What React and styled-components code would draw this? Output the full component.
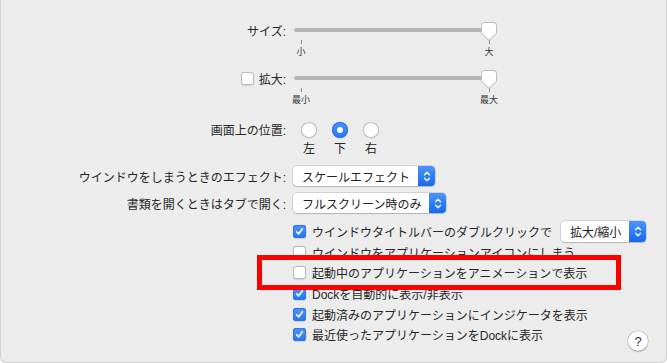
import React from "react";
import styled, { createGlobalStyle, css } from "styled-components";

const GlobalStyle = createGlobalStyle`
  html, body {
    margin: 0;
    padding: 0;
    background: #ffffff;
  }
  body {
    font-family: "Liberation Sans", "Noto Sans CJK JP", sans-serif;
    -webkit-font-smoothing: antialiased;
  }
`;

const Window = styled.div`
  position: relative;
  box-sizing: border-box;
  width: 667px;
  height: 363px;
  padding-top: 20px;
  background: #ececec;
  border: 1px solid #d3d3d3;
  border-top: none;
  border-radius: 0 0 6px 6px;
  color: #262626;
  font-size: 12px;
  overflow: hidden;
`;

const Field = styled.div`
  display: grid;
  grid-template-columns: 285px auto;
  column-gap: 7px;
  align-items: start;
  margin-top: ${p => p.$mt || 0}px;
`;

const Label = styled.div`
  height: ${p => p.$h || 20}px;
  display: flex;
  align-items: center;
  justify-content: flex-end;
  gap: 5px;
  white-space: nowrap;
`;

const SliderBox = styled.div`
  width: 204px;
  display: flex;
  flex-direction: column;
`;

const TrackRow = styled.div`
  height: 20px;
  display: flex;
  align-items: center;
`;

const Track = styled.div`
  flex: 1;
  height: 4px;
  margin-left: 1px;
  border-radius: 2px;
  background: #b5b5b5;
`;

const ThumbSvg = styled.svg`
  flex: none;
  margin-top: 2px;
  margin-left: -1px;
  filter: drop-shadow(0 0.5px 0.5px rgba(0, 0, 0, 0.18));
`;

const Ticks = styled.div`
  height: 20px;
  display: flex;
  justify-content: space-between;
`;

const Tick = styled.div`
  width: 16px;
  display: flex;
  flex-direction: column;
  align-items: center;
  font-size: 9px;
  line-height: 12px;
  white-space: nowrap;
  color: #333;

  &::before {
    content: "";
    width: 1px;
    height: 4px;
    margin-bottom: 2px;
    background: #8c8c8c;
  }
`;

const boxBase = css`
  box-sizing: border-box;
  flex: none;
  background: #fff;
  box-shadow: inset 0 0 0 1px #b9b9b9, 0 0.5px 1px rgba(0, 0, 0, 0.12);
`;

const blueBox = css`
  background: linear-gradient(#4b95fa, #2674f3);
  box-shadow: inset 0 0 0 1px #2b73e6, 0 0.5px 1px rgba(0, 0, 0, 0.12);
`;

const Checkbox = styled.span`
  ${boxBase}
  width: 13px;
  height: 13px;
  border-radius: 3px;
  display: flex;
  align-items: center;
  justify-content: center;
  ${p => p.$checked && blueBox}
`;

const RadioGroup = styled.div`
  display: flex;
  gap: 15px;
  margin-left: 8px;
`;

const RadioItem = styled.div`
  width: 16px;
  display: flex;
  flex-direction: column;
  align-items: center;
  gap: 2px;
  line-height: 18px;
`;

const Radio = styled.span`
  ${boxBase}
  width: 16px;
  height: 16px;
  margin-top: 2px;
  border-radius: 50%;
  display: flex;
  align-items: center;
  justify-content: center;
  ${p => p.$checked && blueBox}

  &::after {
    content: "";
    width: 6px;
    height: 6px;
    border-radius: 50%;
    background: #fff;
    display: ${p => (p.$checked ? "block" : "none")};
  }
`;

const Popup = styled.div`
  display: inline-flex;
  align-items: stretch;
  box-sizing: border-box;
  height: ${p => p.$h || 20}px;
  margin-left: ${p => p.$ml || 0}px;
  background: #fff;
  border-radius: 4px;
  box-shadow: 0 0 0 0.5px rgba(0, 0, 0, 0.22), 0 1px 1px rgba(0, 0, 0, 0.14);
  white-space: nowrap;
`;

const PopupText = styled.span`
  display: flex;
  align-items: center;
  padding: 0 8px 0 9px;
  color: #222;
`;

const Stepper = styled.span`
  width: 17px;
  display: flex;
  align-items: center;
  justify-content: center;
  border-radius: 0 4px 4px 0;
  background: linear-gradient(#4a95fb, #1768f1);
`;

const CheckSection = styled.div`
  display: grid;
  margin-top: 8px;
  padding-left: 292px;

  & > * {
    grid-area: 1 / 1;
  }
`;

const CheckList = styled.div`
  display: flex;
  flex-direction: column;
  align-items: flex-start;
`;

const CheckRow = styled.div`
  height: 20.7px;
  display: flex;
  align-items: center;
  gap: 6px;
  white-space: nowrap;
`;

const HelpButton = styled.div`
  justify-self: end;
  align-self: end;
  margin-right: 18px;
  margin-bottom: -6px;
  width: 20px;
  height: 20px;
  box-sizing: border-box;
  border-radius: 50%;
  background: #fff;
  box-shadow: 0 0 0 0.5px rgba(0, 0, 0, 0.25), 0 1px 1.5px rgba(0, 0, 0, 0.2);
  display: flex;
  align-items: center;
  justify-content: center;
  font-size: 13px;
  color: #333;
`;

const Highlight = styled.div`
  position: absolute;
  left: 256px;
  top: 255px;
  width: 364px;
  height: 35px;
  box-sizing: border-box;
  border: 5px solid #ff0000;
  pointer-events: none;
`;

const Thumb = () => (
  <ThumbSvg width="16" height="19" viewBox="0 0 16 19">
    <path
      d="M3.5 0.5 H12.5 Q15.5 0.5 15.5 3.5 V10.5 Q15.5 11.5 14.5 12.4 L8 18.3 L1.5 12.4 Q0.5 11.5 0.5 10.5 V3.5 Q0.5 0.5 3.5 0.5 Z"
      fill="#fff"
      stroke="#bdbdbd"
      strokeWidth="1"
    />
  </ThumbSvg>
);

const Slider = ({ min, max }) => (
  <SliderBox>
    <TrackRow>
      <Track />
      <Thumb />
    </TrackRow>
    <Ticks>
      <Tick>{min}</Tick>
      <Tick>{max}</Tick>
    </Ticks>
  </SliderBox>
);

const Check = ({ checked }) => (
  <Checkbox $checked={checked}>
    {checked && (
      <svg width="9" height="9" viewBox="0 0 9 9">
        <path d="M1.6 4.8 L3.6 6.9 L7.4 1.8" fill="none" stroke="#fff" strokeWidth="1.6" strokeLinecap="round" strokeLinejoin="round" />
      </svg>
    )}
  </Checkbox>
);

const Select = ({ value, h, ml }) => (
  <Popup $h={h} $ml={ml}>
    <PopupText>{value}</PopupText>
    <Stepper>
      <svg width="8" height="13" viewBox="0 0 8 13">
        <path d="M1.5 4.8 L4 2.3 L6.5 4.8 M1.5 8.2 L4 10.7 L6.5 8.2" fill="none" stroke="#fff" strokeWidth="1.3" strokeLinecap="round" strokeLinejoin="round" />
      </svg>
    </Stepper>
  </Popup>
);

const positions = [
  { label: "左", checked: false },
  { label: "下", checked: true },
  { label: "右", checked: false },
];

const options = [
  { text: "ウインドウタイトルバーのダブルクリックで", checked: true, select: "拡大/縮小" },
  { text: "ウインドウをアプリケーションアイコンにしまう", checked: false },
  { text: "起動中のアプリケーションをアニメーションで表示", checked: false },
  { text: "Dockを自動的に表示/非表示", checked: true },
  { text: "起動済みのアプリケーションにインジケータを表示", checked: true },
  { text: "最近使ったアプリケーションをDockに表示", checked: true },
];

export default function App() {
  return (
    <>
      <GlobalStyle />
      <Window>
        <Field>
          <Label>サイズ:</Label>
          <Slider min="小" max="大" />
        </Field>

        <Field $mt={8}>
          <Label>
            <Check checked={false} />
            拡大:
          </Label>
          <Slider min="最小" max="最大" />
        </Field>

        <Field $mt={12}>
          <Label $h={18}>画面上の位置:</Label>
          <RadioGroup>
            {positions.map(p => (
              <RadioItem key={p.label}>
                <Radio $checked={p.checked} />
                {p.label}
              </RadioItem>
            ))}
          </RadioGroup>
        </Field>

        <Field $mt={8}>
          <Label>ウインドウをしまうときのエフェクト:</Label>
          <div>
            <Select value="スケールエフェクト" />
          </div>
        </Field>

        <Field $mt={7}>
          <Label>書類を開くときはタブで開く:</Label>
          <div>
            <Select value="フルスクリーン時のみ" />
          </div>
        </Field>

        <CheckSection>
          <CheckList>
            {options.map(o => (
              <CheckRow key={o.text}>
                <Check checked={o.checked} />
                {o.text}
                {o.select && <Select value={o.select} h={21} ml={3} />}
              </CheckRow>
            ))}
          </CheckList>
          <HelpButton>?</HelpButton>
        </CheckSection>

        <Highlight />
      </Window>
    </>
  );
}
